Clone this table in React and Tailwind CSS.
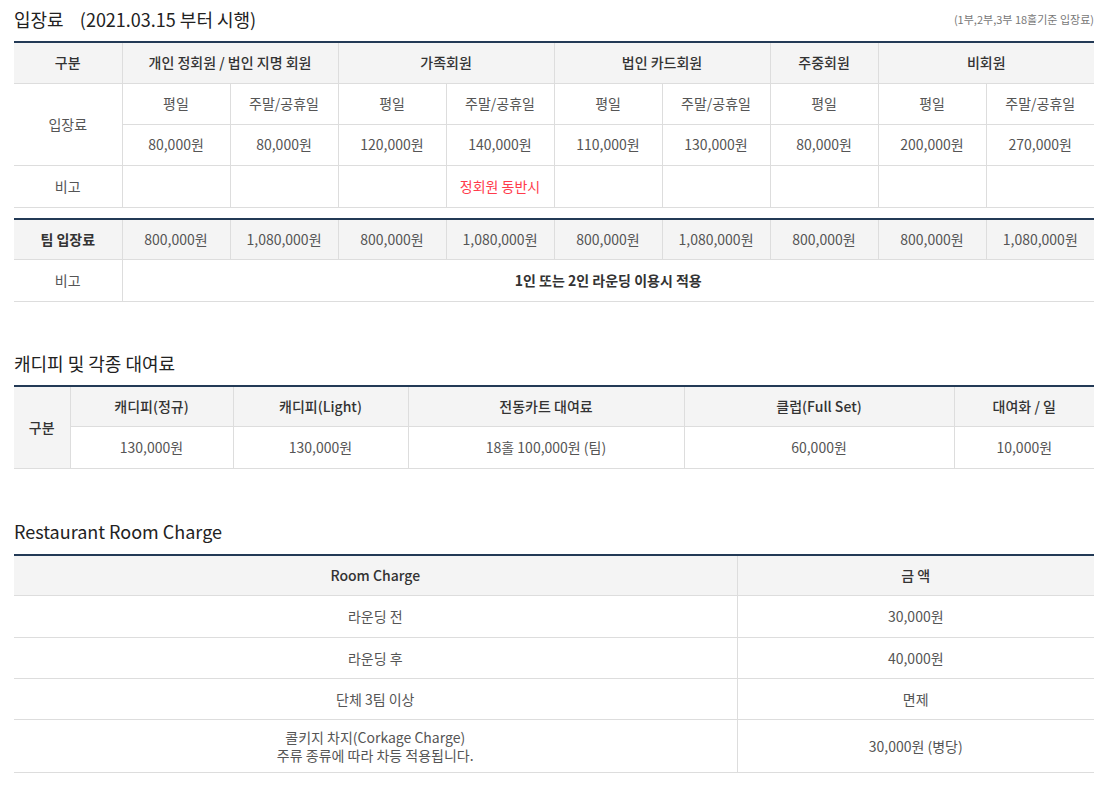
import React from "react";

const font = { fontFamily: '"Noto Sans CJK KR", "Noto Sans", sans-serif' };

const TH = ({ children, className = "", ...rest }) => (
  <td
    {...rest}
    className={`border-l border-b border-[#dddddd] first:border-l-0 bg-[#f4f4f4] text-center text-[14px] font-medium text-[#333] ${className}`}
  >
    {children}
  </td>
);

const TD = ({ children, className = "", ...rest }) => (
  <td
    {...rest}
    className={`border-l border-b border-[#dddddd] first:border-l-0 text-center text-[14px] text-[#555] ${className}`}
  >
    {children}
  </td>
);

const Title = ({ children, right }) => (
  <div className="flex h-[26px] items-center justify-between mb-[9px]">
    <h2 className="text-[18px] text-[#222] font-normal">{children}</h2>
    {right && <span className="text-[11px] text-[#777]">{right}</span>}
  </div>
);

export default function App() {
  const cols10 = Array.from({ length: 10 });
  return (
    <div className="bg-white w-[1120px] min-h-[787px]" style={font}>
      <div className="w-[1080px] ml-[14px] pt-[6px]">
        <Title right="(1부,2부,3부 18홀기준 입장료)">
          입장료&nbsp;&nbsp;&nbsp;&nbsp;(2021.03.15 부터 시행)
        </Title>

        <table className="w-full table-fixed border-collapse border-t-2 border-[#233a56]">
          <colgroup>
            {cols10.map((_, i) => (
              <col key={i} className="w-[108px]" />
            ))}
          </colgroup>
          <tbody>
            <tr className="h-[41px]">
              <TH>구분</TH>
              <TH colSpan={2}>개인 정회원 / 법인 지명 회원</TH>
              <TH colSpan={2}>가족회원</TH>
              <TH colSpan={2}>법인 카드회원</TH>
              <TH>주중회원</TH>
              <TH colSpan={2}>비회원</TH>
            </tr>
            <tr className="h-[41px]">
              <TD rowSpan={2}>입장료</TD>
              <TD>평일</TD>
              <TD>주말/공휴일</TD>
              <TD>평일</TD>
              <TD>주말/공휴일</TD>
              <TD>평일</TD>
              <TD>주말/공휴일</TD>
              <TD>평일</TD>
              <TD>평일</TD>
              <TD>주말/공휴일</TD>
            </tr>
            <tr className="h-[41px]">
              <TD className="!border-l">80,000원</TD>
              <TD>80,000원</TD>
              <TD>120,000원</TD>
              <TD>140,000원</TD>
              <TD>110,000원</TD>
              <TD>130,000원</TD>
              <TD>80,000원</TD>
              <TD>200,000원</TD>
              <TD>270,000원</TD>
            </tr>
            <tr className="h-[42px]">
              <TD>비고</TD>
              <TD></TD>
              <TD></TD>
              <TD></TD>
              <TD className="!text-[#ff3b4b]">정회원 동반시</TD>
              <TD></TD>
              <TD></TD>
              <TD></TD>
              <TD></TD>
              <TD></TD>
            </tr>
          </tbody>
        </table>

        <table className="mt-[10px] w-full table-fixed border-collapse border-t-2 border-[#233a56]">
          <colgroup>
            {cols10.map((_, i) => (
              <col key={i} className="w-[108px]" />
            ))}
          </colgroup>
          <tbody>
            <tr className="h-[41px] bg-[#f4f4f4]">
              <TD className="!font-bold !text-[#333]">팀 입장료</TD>
              <TD>800,000원</TD>
              <TD>1,080,000원</TD>
              <TD>800,000원</TD>
              <TD>1,080,000원</TD>
              <TD>800,000원</TD>
              <TD>1,080,000원</TD>
              <TD>800,000원</TD>
              <TD>800,000원</TD>
              <TD>1,080,000원</TD>
            </tr>
            <tr className="h-[42px]">
              <TD>비고</TD>
              <TD colSpan={9} className="!font-bold !text-[#333]">
                1인 또는 2인 라운딩 이용시 적용
              </TD>
            </tr>
          </tbody>
        </table>

        <div className="mt-[48px]">
          <Title>캐디피 및 각종 대여료</Title>
        </div>
        <table className="w-full table-fixed border-collapse border-t-2 border-[#233a56]">
          <colgroup>
            <col className="w-[56px]" />
            <col className="w-[163px]" />
            <col className="w-[175px]" />
            <col className="w-[276px]" />
            <col className="w-[270px]" />
            <col className="w-[140px]" />
          </colgroup>
          <tbody>
            <tr className="h-[40px]">
              <TH rowSpan={2}>구분</TH>
              <TH>캐디피(정규)</TH>
              <TH>캐디피(Light)</TH>
              <TH>전동카트 대여료</TH>
              <TH>클럽(Full Set)</TH>
              <TH>대여화 / 일</TH>
            </tr>
            <tr className="h-[42px]">
              <TD className="!border-l">130,000원</TD>
              <TD>130,000원</TD>
              <TD>18홀 100,000원 (팀)</TD>
              <TD>60,000원</TD>
              <TD>10,000원</TD>
            </tr>
          </tbody>
        </table>

        <div className="mt-[50px]">
          <Title>Restaurant Room Charge</Title>
        </div>
        <table className="w-full table-fixed border-collapse border-t-2 border-[#233a56]">
          <colgroup>
            <col className="w-[723px]" />
            <col className="w-[357px]" />
          </colgroup>
          <tbody>
            <tr className="h-[41px]">
              <TH>Room Charge</TH>
              <TH>금 액</TH>
            </tr>
            <tr className="h-[42px]">
              <TD>라운딩 전</TD>
              <TD>30,000원</TD>
            </tr>
            <tr className="h-[41px]">
              <TD>라운딩 후</TD>
              <TD>40,000원</TD>
            </tr>
            <tr className="h-[41px]">
              <TD>단체 3팀 이상</TD>
              <TD>면제</TD>
            </tr>
            <tr className="h-[53px]">
              <TD className="leading-[18px]">
                콜키지 차지(Corkage Charge)
                <br />
                주류 종류에 따라 차등 적용됩니다.
              </TD>
              <TD>30,000원 (병당)</TD>
            </tr>
          </tbody>
        </table>
      </div>
    </div>
  );
}
